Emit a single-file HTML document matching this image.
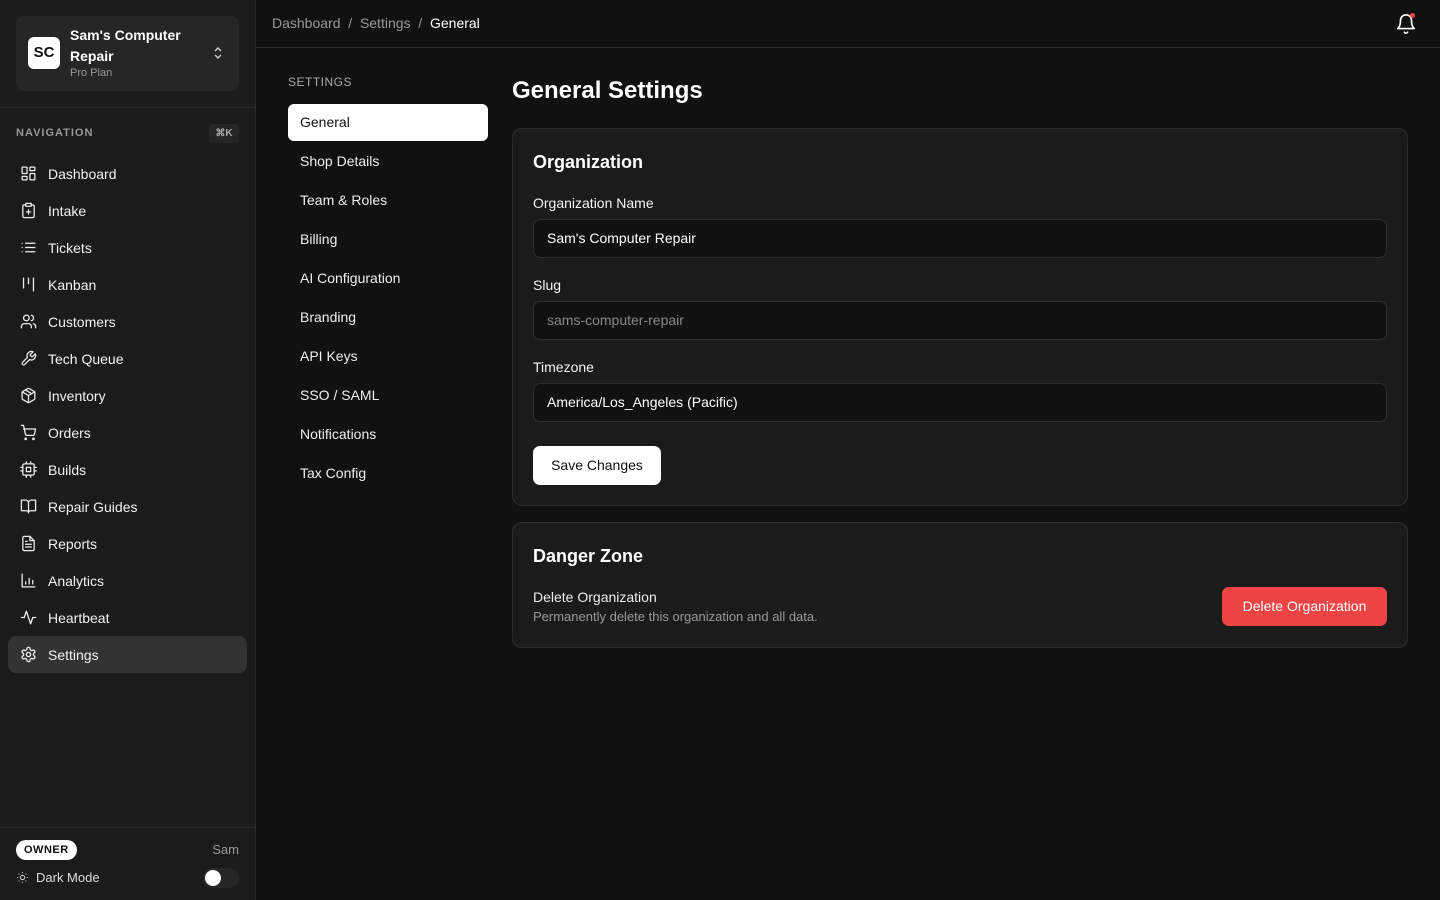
<!DOCTYPE html>
<html><head><meta charset="utf-8"><style>
*{box-sizing:border-box;margin:0;padding:0}
body{width:1440px;height:900px;background:#111;font-family:"Liberation Sans",sans-serif;color:#fff;position:relative;overflow:hidden;font-size:14px}
.sb{position:absolute;left:0;top:0;width:256px;height:900px;background:#1b1b1b;border-right:1px solid #2c2c2c}
.org{position:absolute;left:16px;top:16px;width:223px;height:75px;background:#262626;border-radius:8px}
.logo{position:absolute;left:12px;top:21px;width:32px;height:32px;background:#fff;border-radius:6px;color:#111;font-weight:bold;font-size:15px;text-align:center;line-height:32px}
.on{position:absolute;left:54px;top:9px;font-size:14px;font-weight:bold;line-height:21px;width:130px}
.pp{position:absolute;left:54px;top:51px;font-size:11px;color:#999}
.hr{position:absolute;left:0;width:255px;border-top:1px solid #2c2c2c}
.navh{position:absolute;left:16px;top:127px;font-size:11px;letter-spacing:1px;color:#999;font-weight:bold}
.kbd{position:absolute;left:209px;top:124px;width:30px;height:19px;background:#262626;border-radius:4px;font-size:10px;color:#aaa;text-align:center;line-height:19px;font-weight:bold}
.ni{position:absolute;left:8px;width:239px;height:37px;border-radius:8px;display:flex;align-items:center;padding-left:12px;font-size:14px;color:#f2f2f2}
.ni svg{width:17px;height:17px;margin-right:11px;fill:none;stroke:#eee;stroke-width:1.8;stroke-linecap:round;stroke-linejoin:round}
.act{background:#333}
.top{position:absolute;left:256px;top:0;right:0;height:48px;border-bottom:1px solid #2c2c2c}
.bc{position:absolute;left:16px;top:15px;font-size:14px;color:#999}
.sl{position:absolute;left:288px;top:75px;font-size:12px;color:#aaa;letter-spacing:.5px}
.si{position:absolute;left:288px;width:200px;height:37px;border-radius:6px;padding-left:12px;line-height:37px;font-size:14px;color:#eee}
.si.a{background:#fff;color:#111}
h1{position:absolute;left:512px;top:77px;font-size:24px;font-weight:bold}
.card{position:absolute;left:512px;width:896px;background:#1b1b1b;border:1px solid #2e2e2e;border-radius:10px}
.ct{position:absolute;left:20px;font-size:18px;font-weight:bold}
.lb{position:absolute;left:20px;font-size:14px;color:#f4f4f4}
.in{position:absolute;left:20px;width:854px;height:39px;background:#111;border:1px solid #2e2e2e;border-radius:7px;padding-left:13px;line-height:37px;font-size:14px}
</style></head><body>
<div class="sb">
<div class="org"><div class="logo">SC</div><div class="on">Sam's Computer Repair</div><div class="pp">Pro Plan</div>
<svg style="position:absolute;left:197px;top:30px" width="10" height="14" viewBox="0 0 10 14" fill="none" stroke="#ccc" stroke-width="1.5"><path d="M2 5l3-3 3 3M2 9l3 3 3-3"/></svg></div>
<div class="hr" style="top:107px"></div>
<div class="navh">NAVIGATION</div><div class="kbd">⌘K</div>
<div class="ni" style="top:155px"><svg viewBox="0 0 24 24"><rect x="3" y="3" width="7" height="9" rx="1"/><rect x="14" y="3" width="7" height="5" rx="1"/><rect x="14" y="12" width="7" height="9" rx="1"/><rect x="3" y="16" width="7" height="5" rx="1"/></svg>Dashboard</div>
<div class="ni" style="top:192px"><svg viewBox="0 0 24 24"><rect x="8" y="2" width="8" height="4" rx="1"/><path d="M16 4h2a2 2 0 0 1 2 2v14a2 2 0 0 1-2 2H6a2 2 0 0 1-2-2V6a2 2 0 0 1 2-2h2M12 11v6M9 14h6"/></svg>Intake</div>
<div class="ni" style="top:229px"><svg viewBox="0 0 24 24"><path d="M8 6h13M8 12h13M8 18h13M3 6h.01M3 12h.01M3 18h.01"/></svg>Tickets</div>
<div class="ni" style="top:266px"><svg viewBox="0 0 24 24"><path d="M5 3v14M12 3v8M19 3v18"/></svg>Kanban</div>
<div class="ni" style="top:303px"><svg viewBox="0 0 24 24"><path d="M16 21v-2a4 4 0 0 0-4-4H6a4 4 0 0 0-4 4v2"/><circle cx="9" cy="7" r="4"/><path d="M22 21v-2a4 4 0 0 0-3-3.87M16 3.13a4 4 0 0 1 0 7.75"/></svg>Customers</div>
<div class="ni" style="top:340px"><svg viewBox="0 0 24 24"><path d="M14.7 6.3a1 1 0 0 0 0 1.4l1.6 1.6a1 1 0 0 0 1.4 0l3.77-3.77a6 6 0 0 1-7.94 7.940l-6.91 6.91a2.12 2.12 0 0 1-3-3l6.91-6.91a6 6 0 0 1 7.94-7.94z"/></svg>Tech Queue</div>
<div class="ni" style="top:377px"><svg viewBox="0 0 24 24"><path d="M21 16V8a2 2 0 0 0-1-1.73l-7-4a2 2 0 0 0-2 0l-7 4A2 2 0 0 0 3 8v8a2 2 0 0 0 1 1.73l7 4a2 2 0 0 0 2 0l7-4A2 2 0 0 0 21 16z"/><path d="M3.3 7L12 12l8.7-5M12 22V12M7.5 4.2l9 5.2"/></svg>Inventory</div>
<div class="ni" style="top:414px"><svg viewBox="0 0 24 24"><circle cx="8" cy="21" r="1"/><circle cx="19" cy="21" r="1"/><path d="M2 2h3l2.7 12.4a2 2 0 0 0 2 1.6h8.7a2 2 0 0 0 2-1.6L22 7H5.1"/></svg>Orders</div>
<div class="ni" style="top:451px"><svg viewBox="0 0 24 24"><rect x="4" y="4" width="16" height="16" rx="2"/><rect x="9" y="9" width="6" height="6"/><path d="M9 1v3M15 1v3M9 20v3M15 20v3M20 9h3M20 14h3M1 9h3M1 14h3"/></svg>Builds</div>
<div class="ni" style="top:488px"><svg viewBox="0 0 24 24"><path d="M2 3h6a4 4 0 0 1 4 4v14a3 3 0 0 0-3-3H2zM22 3h-6a4 4 0 0 0-4 4v14a3 3 0 0 1 3-3h7z"/></svg>Repair Guides</div>
<div class="ni" style="top:525px"><svg viewBox="0 0 24 24"><path d="M14 2H6a2 2 0 0 0-2 2v16a2 2 0 0 0 2 2h12a2 2 0 0 0 2-2V8z"/><path d="M14 2v6h6M16 13H8M16 17H8M10 9H8"/></svg>Reports</div>
<div class="ni" style="top:562px"><svg viewBox="0 0 24 24"><path d="M3 3v18h18M8 17v-3M13 17V9M18 17v-5"/></svg>Analytics</div>
<div class="ni" style="top:599px"><svg viewBox="0 0 24 24"><path d="M22 12h-4l-3 9L9 3l-3 9H2"/></svg>Heartbeat</div>
<div class="ni act" style="top:636px"><svg viewBox="0 0 24 24"><path d="M12.22 2h-.44a2 2 0 0 0-2 2v.18a2 2 0 0 1-1 1.73l-.43.25a2 2 0 0 1-2 0l-.15-.08a2 2 0 0 0-2.730.73l-.22.38a2 2 0 0 0 .73 2.73l.15.1a2 2 0 0 1 1 1.72v.51a2 2 0 0 1-1 1.74l-.15.09a2 2 0 0 0-.73 2.73l.22.38a2 2 0 0 0 2.73.73l.15-.08a2 2 0 0 1 2 0l.43.25a2 2 0 0 1 1 1.73V20a2 2 0 0 0 2 2h.44a2 2 0 0 0 2-2v-.18a2 2 0 0 1 1-1.73l.43-.25a2 2 0 0 1 2 0l.15.08a2 2 0 0 0 2.73-.73l.22-.39a2 2 0 0 0-.73-2.73l-.15-.08a2 2 0 0 1-1-1.74v-.5a2 2 0 0 1 1-1.74l.15-.09a2 2 0 0 0 .73-2.73l-.22-.38a2 2 0 0 0-2.73-.73l-.15.08a2 2 0 0 1-2 0l-.43-.25a2 2 0 0 1-1-1.73V4a2 2 0 0 0-2-2z"/><circle cx="12" cy="12" r="3"/></svg>Settings</div>
<div class="hr" style="top:827px"></div>
<div style="position:absolute;left:16px;top:840px;height:20px;padding:0 8px;background:#fff;color:#111;border-radius:10px;font-size:11px;font-weight:bold;line-height:20px;letter-spacing:.5px">OWNER</div>
<div style="position:absolute;right:16px;top:842px;font-size:13px;color:#999">Sam</div>
<svg style="position:absolute;left:16px;top:871px" width="13" height="13" viewBox="0 0 24 24" fill="none" stroke="#ccc" stroke-width="2"><circle cx="12" cy="12" r="4"/><path d="M12 2v2M12 20v2M4.9 4.9l1.4 1.4M17.7 17.7l1.4 1.4M2 12h2M20 12h2M4.9 19.1l1.4-1.4M17.7 6.3l1.4-1.4"/></svg>
<div style="position:absolute;left:36px;top:870px;font-size:13px;color:#ddd">Dark Mode</div>
<div style="position:absolute;left:203px;top:868px;width:36px;height:20px;background:#262626;border-radius:10px"><div style="position:absolute;left:2px;top:2px;width:16px;height:16px;background:#fff;border-radius:50%"></div></div>
</div>
<div class="top"><div class="bc">Dashboard&nbsp; / &nbsp;Settings&nbsp; / &nbsp;<span style="color:#fff">General</span></div>
<svg style="position:absolute;left:1139px;top:12px" width="22" height="24" viewBox="0 0 24 24" fill="none" stroke="#fff" stroke-width="1.8" stroke-linecap="round" stroke-linejoin="round"><path d="M6 8a6 6 0 0 1 12 0c0 7 3 9 3 9H3s3-2 3-9M10.3 21a1.94 1.94 0 0 0 3.4 0"/></svg>
<div style="position:absolute;left:1154px;top:13px;width:5px;height:5px;border-radius:50%;background:#ef4444"></div></div>
<div class="sl">SETTINGS</div>
<div class="si a" style="top:104px">General</div>
<div class="si" style="top:143px">Shop Details</div>
<div class="si" style="top:182px">Team &amp; Roles</div>
<div class="si" style="top:221px">Billing</div>
<div class="si" style="top:260px">AI Configuration</div>
<div class="si" style="top:299px">Branding</div>
<div class="si" style="top:338px">API Keys</div>
<div class="si" style="top:377px">SSO / SAML</div>
<div class="si" style="top:416px">Notifications</div>
<div class="si" style="top:455px">Tax Config</div>
<h1>General Settings</h1>
<div class="card" style="top:128px;height:378px">
<div class="ct" style="top:23px">Organization</div>
<div class="lb" style="top:66px">Organization Name</div>
<div class="in" style="top:90px">Sam's Computer Repair</div>
<div class="lb" style="top:148px">Slug</div>
<div class="in" style="top:172px;color:#888">sams-computer-repair</div>
<div class="lb" style="top:230px">Timezone</div>
<div class="in" style="top:254px">America/Los_Angeles (Pacific)</div>
<div style="position:absolute;left:20px;top:317px;width:128px;height:39px;background:#fff;color:#111;border-radius:7px;text-align:center;line-height:39px;font-size:14px">Save Changes</div>
</div>
<div class="card" style="top:522px;height:126px">
<div class="ct" style="top:23px">Danger Zone</div>
<div style="position:absolute;left:20px;top:66px;font-size:14px;color:#eee">Delete Organization</div>
<div style="position:absolute;left:20px;top:86px;font-size:13px;color:#999">Permanently delete this organization and all data.</div>
<div style="position:absolute;right:20px;top:64px;width:165px;height:39px;background:#ef4444;border-radius:7px;text-align:center;line-height:39px;font-size:14px">Delete Organization</div>
</div>
</body></html>
